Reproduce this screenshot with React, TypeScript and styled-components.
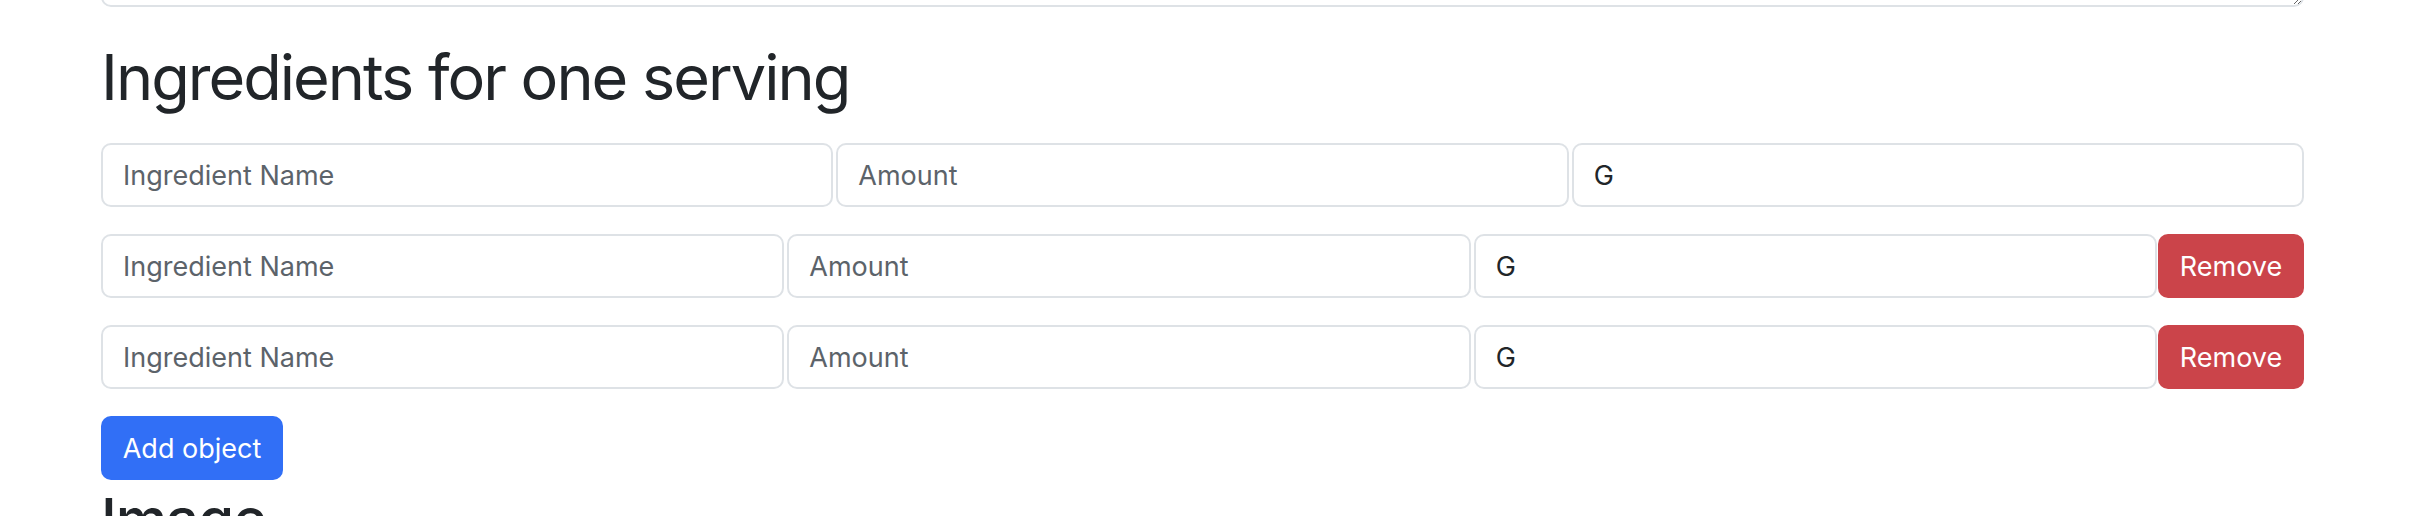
import React from 'react';
import styled, { createGlobalStyle } from 'styled-components';

const GlobalStyle = createGlobalStyle`
  html, body {
    margin: 0;
    padding: 0;
    background: #ffffff;
    overflow: hidden;
  }
  body {
    font-family: Inter, "Liberation Sans", Arial, sans-serif;
    color: #212529;
  }
  * {
    box-sizing: border-box;
  }
`;

const Page = styled.div`
  width: 2420px;
  height: 516px;
  padding: 0 116px 0 101px;
  overflow: hidden;
`;

const Description = styled.textarea`
  display: block;
  width: 100%;
  height: 110px;
  margin: -103px 0 0;
  padding: 10px 20px;
  border: 2px solid #dee2e6;
  border-radius: 10px;
  font: inherit;
  font-size: 27px;
  resize: vertical;
`;

const SectionTitle = styled.h1`
  margin: 30px 0 0;
  height: 106px;
  font-size: 63px;
  font-weight: 400;
  line-height: 80px;
  letter-spacing: -2px;
  color: #212529;
`;

const IngredientRow = styled.div`
  display: flex;
  gap: 3px;
  height: 64px;
  margin-bottom: 27px;
`;

const Field = styled.input`
  flex: 1 1 0;
  min-width: 0;
  height: 64px;
  padding: 10px 20px;
  border: 2px solid #dee2e6;
  border-radius: 10px;
  background: #ffffff;
  font-family: inherit;
  font-size: 27px;
  color: #212529;
  outline: none;

  &::placeholder {
    color: #5c636a;
    opacity: 1;
  }
`;

const Button = styled.button<{ $variant: 'danger' | 'primary' }>`
  flex: 0 0 auto;
  height: 64px;
  padding: 0 20px;
  border: none;
  border-radius: 10px;
  background: ${({ $variant }) => ($variant === 'danger' ? '#cb444a' : '#316ff6')};
  color: #ffffff;
  font-family: inherit;
  font-size: 27px;
  font-weight: 400;
  cursor: pointer;
`;

const RemoveButton = styled(Button)`
  margin-left: -2px;
  width: 146px;
`;

const AddButton = styled(Button)`
  display: block;
  width: 182px;
`;

const NextTitle = styled.h2`
  margin: 4px 0 0;
  font-size: 58px;
  font-weight: 500;
  line-height: 70px;
  letter-spacing: -1px;
  color: #212529;
`;

type Ingredient = { id: number; unit: string; removable: boolean };

const ingredients: Ingredient[] = [
  { id: 1, unit: 'G', removable: false },
  { id: 2, unit: 'G', removable: true },
  { id: 3, unit: 'G', removable: true },
];

export default function App() {
  return (
    <>
      <GlobalStyle />
      <Page>
        <Description defaultValue="" />
        <SectionTitle>Ingredients for one serving</SectionTitle>
        {ingredients.map((item) => (
          <IngredientRow key={item.id}>
            <Field placeholder="Ingredient Name" />
            <Field placeholder="Amount" />
            <Field defaultValue={item.unit} />
            {item.removable && <RemoveButton $variant="danger">Remove</RemoveButton>}
          </IngredientRow>
        ))}
        <AddButton $variant="primary">Add object</AddButton>
        <NextTitle>Image</NextTitle>
      </Page>
    </>
  );
}
